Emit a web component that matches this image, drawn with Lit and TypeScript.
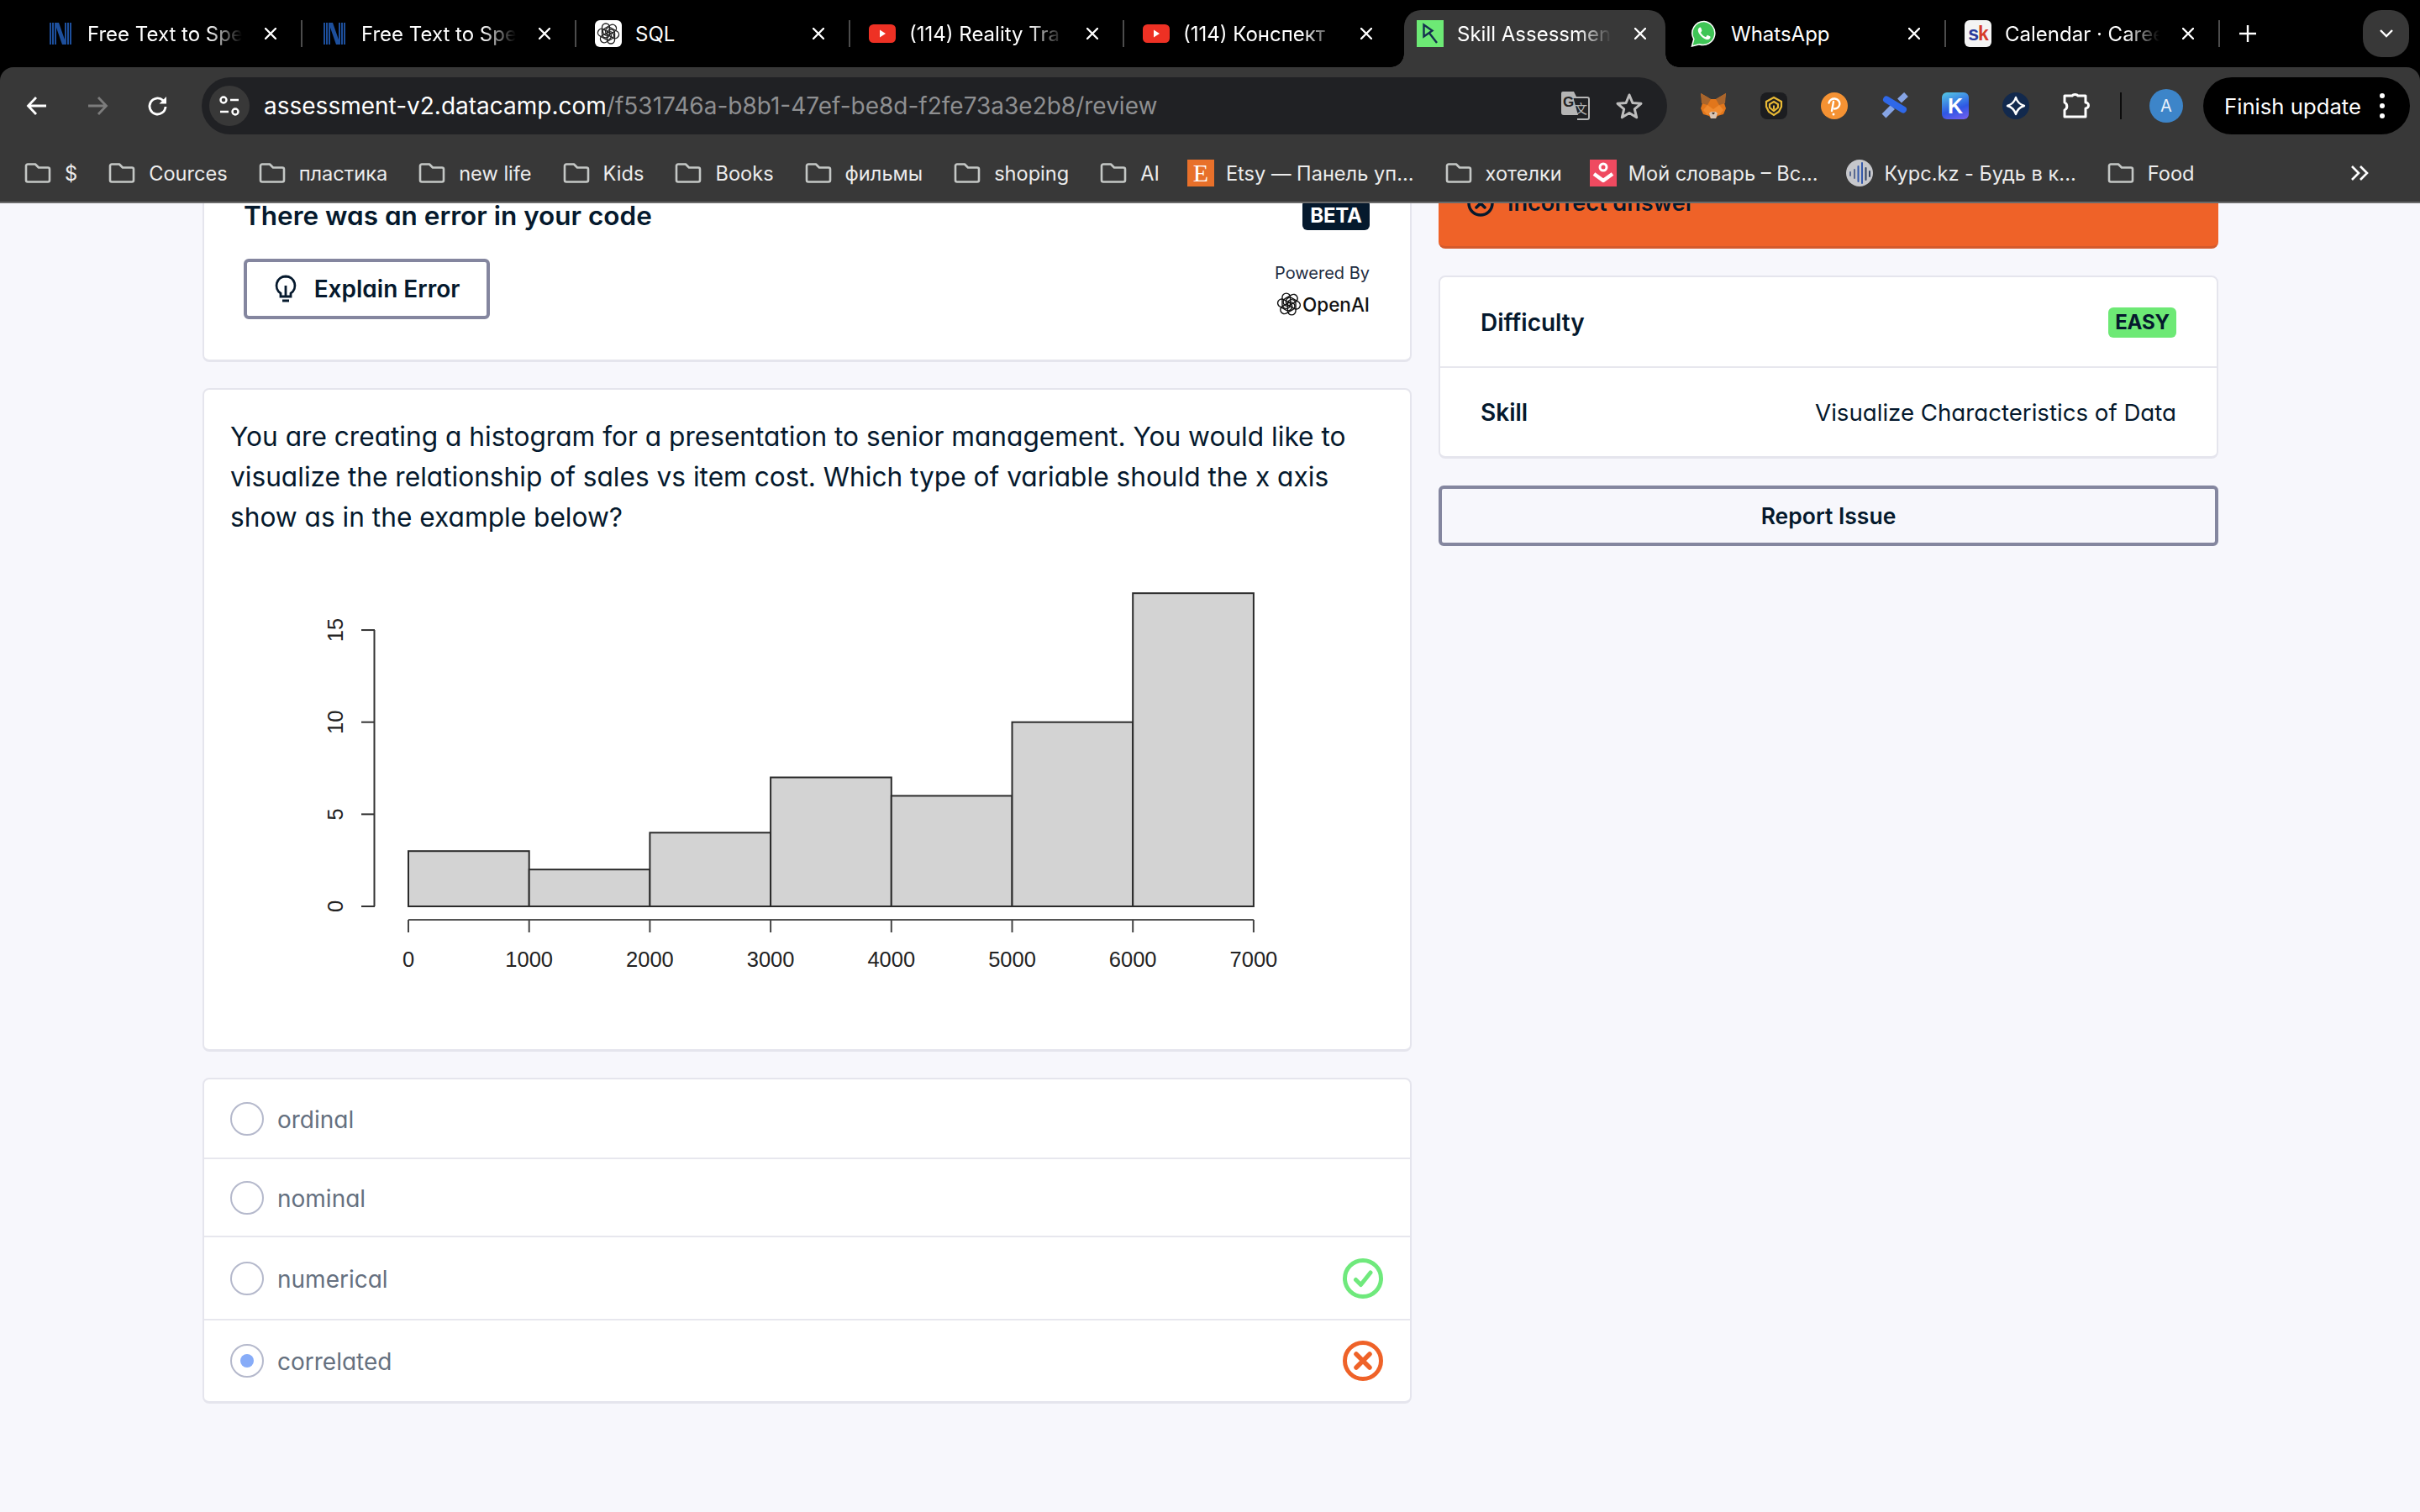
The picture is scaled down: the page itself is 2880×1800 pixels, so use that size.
import { LitElement, html, svg, css } from "lit";
import { customElement } from "lit/decorators.js";

const closeIcon = html`<svg class="close" viewBox="0 0 14 14"><path d="M1 1l12 12M13 1L1 13" stroke="#fff" stroke-width="2.4" stroke-linecap="round" fill="none"/></svg>`;

const knot = (c: string, w = 1.6) => svg`<g fill="none" stroke="${c}" stroke-width="${w}">
  ${[0, 60, 120, 180, 240, 300].map((a) => svg`<rect x="6.5" y="2" width="9" height="17" rx="4.5" transform="rotate(${a} 14 14)"/>`)}
</g>`;

const nIcon = html`<svg class="fav" viewBox="0 0 32 32"><g fill="#1d4f9c">
  <rect x="3" y="3" width="2" height="26"/><rect x="6" y="3" width="2" height="26"/><rect x="9" y="3" width="2" height="26"/>
  <rect x="21" y="3" width="2" height="26"/><rect x="24" y="3" width="2" height="26"/><rect x="27" y="3" width="2" height="26"/>
  <path d="M9 3h5l9 26h-5z"/></g></svg>`;
const sqlIcon = html`<svg class="fav" viewBox="0 0 32 32"><rect width="32" height="32" rx="6" fill="#fff"/><g transform="translate(2 2)">${knot("#222", 1.4)}</g></svg>`;
const ytIcon = html`<svg class="fav" viewBox="0 0 32 32"><rect y="5" width="32" height="22" rx="5.5" fill="#ee3124"/><path d="M13 11.5l7 4.5-7 4.5z" fill="#fff"/></svg>`;
const dcIcon = html`<svg class="fav" viewBox="0 0 32 32"><rect width="32" height="32" fill="#6de975"/><path d="M8.5 5.5V19.5L18.5 12.5ZM15.5 16L24 27" fill="none" stroke="#14304f" stroke-width="2.4"/></svg>`;
const waIcon = html`<svg class="fav" viewBox="0 0 32 32"><path d="M16 1.5A14 14 0 0 0 3.8 22.5L1.5 31l8.800-2.300A14 14 0 1 0 16 1.500z" fill="#3fc556" stroke="#fff" stroke-width="1.5"/><path d="M11 8.500c-1 .3-2.500 2-2.200 4.300.4 3 5 8.800 9.800 10.300 2.400.7 4.800-1 5-2.800.1-.8-.2-1-3.200-2.400-.8-.3-1.200 1.500-2.200 2-1 .4-5-2.500-6-5-.3-.9 1.400-1.600 1.200-2.600-.8-3-1.200-4.200-2.400-3.800z" fill="#fff"/></svg>`;
const skIcon = html`<span class="sk"><b>s</b><i>k</i></span>`;

const tabs = [
  { t: "Free Text to Spe", i: nIcon, fade: true },
  { t: "Free Text to Spe", i: nIcon, fade: true },
  { t: "SQL", i: sqlIcon },
  { t: "(114) Reality Tra", i: ytIcon, fade: true },
  { t: "(114) Конспект", i: ytIcon, fade: true },
  { t: "Skill Assessmen", i: dcIcon, fade: true, active: true },
  { t: "WhatsApp", i: waIcon },
  { t: "Calendar · Caree", i: skIcon, fade: true },
];

const folder = html`<svg class="folder" viewBox="0 0 32 24"><path d="M2 3.500A2 2 0 0 1 4 1.500h9l4 4h11a2 2 0 0 1 2 2v13a2 2 0 0 1-2 2H4a2 2 0 0 1-2-2z" fill="none" stroke="#c4c7c5" stroke-width="2.6" stroke-linejoin="round"/></svg>`;
const etsy = html`<span class="etsy">E</span>`;
const slovar = html`<svg class="fav" viewBox="0 0 32 32"><rect width="32" height="32" fill="#ef4a60"/><circle cx="16" cy="9" r="4" fill="none" stroke="#fff" stroke-width="3"/><path d="M5 17l11 8 11-8" fill="none" stroke="#fff" stroke-width="4.5" stroke-linejoin="round"/></svg>`;
const kurs = html`<svg class="fav" viewBox="0 0 32 32"><circle cx="16" cy="16" r="16" fill="#c6c7cb"/><g stroke-width="2" stroke-linecap="round"><path d="M5 15v4" stroke="#5a6a90"/><path d="M10 12v10" stroke="#5a6a90"/><path d="M14.500 8v18" stroke="#3559ab"/><path d="M19 4v24" stroke="#3559ab"/><path d="M23.500 10v14" stroke="#33425f"/><path d="M28 14v6" stroke="#33425f"/></g></svg>`;

const bookmarks = [
  { t: "$", i: folder },
  { t: "Cources", i: folder },
  { t: "пластика", i: folder },
  { t: "new life", i: folder },
  { t: "Kids", i: folder },
  { t: "Books", i: folder },
  { t: "фильмы", i: folder },
  { t: "shoping", i: folder },
  { t: "AI", i: folder },
  { t: "Etsy — Панель уп...", i: etsy, fi: true },
  { t: "хотелки", i: folder },
  { t: "Мой словарь – Вс...", i: slovar, fi: true },
  { t: "Курс.kz - Будь в к...", i: kurs, fi: true },
  { t: "Food", i: folder },
];

const ext = [
  html`<svg class="fav" viewBox="0 0 32 32"><path d="M1 1l12 7h6l12-7-2 12 2 6-3 7-7 2-2 3h-6l-2-3-7-2-3-7 2-6z" fill="#e2761b"/><path d="M1 1l12 7-4 7-7-2zM31 1L19 8l4 7 7-2z" fill="#a9652c"/><path d="M9 15l7 5 7-5 5 6-5 6-4-3h-6l-4 3-5-6z" fill="#f08a2e"/><path d="M11 25l2-2h6l2 2-2 6h-6z" fill="#d9c4b3"/><path d="M14 24h4l-2 2.500z" fill="#33251b"/></svg>`,
  html`<svg class="fav" viewBox="0 0 32 32"><rect width="32" height="32" rx="8" fill="#1c1d20"/><path d="M16 6l9 5v6l-3 6-6 4-6-4-3-6v-6z" fill="none" stroke="#e8b935" stroke-width="2.2"/><path d="M16 11l5 3v4l-5 4-5-4v-4z" fill="none" stroke="#e8b935" stroke-width="2.2"/><path d="M16 15.500v5" stroke="#e8b935" stroke-width="2"/></svg>`,
  html`<svg class="fav" viewBox="0 0 32 32"><circle cx="16" cy="16" r="16" fill="#f59233"/><path d="M13 22l2-11" stroke="#fff" stroke-width="2.4" stroke-linecap="round" fill="none"/><path d="M9.500 12.500a6.500 6 0 1 1 6.500 7" stroke="#fff" stroke-width="2.4" stroke-linecap="round" fill="none"/><circle cx="15" cy="26" r="1.500" fill="#fff"/></svg>`,
  html`<svg class="fav" viewBox="0 0 32 32"><path d="M21.500 10l8-7.500M3 28l10.500-10.500" stroke="#86a4e4" stroke-width="7"/><path d="M6 8.500l20 12" stroke="#2f68e8" stroke-width="8" stroke-linecap="round"/></svg>`,
  html`<span class="kext">K</span>`,
  html`<svg class="fav" viewBox="0 0 32 32"><circle cx="16" cy="16" r="16" fill="#12294d"/><path d="M16 6c1.500 5 5 8.500 10 10-5 1.500-8.500 5-10 10-1.500-5-5-8.500-10-10 5-1.500 8.500-5 10-10z" fill="none" stroke="#fff" stroke-width="2.4" stroke-linejoin="round"/></svg>`,
  html`<svg class="fav" viewBox="0 0 32 32"><path d="M2 4h9a4 3 0 0 1 7 0h9v8a3.500 3.500 0 0 1 0 7v10H2v-8a5 5 0 0 0 0-9z" fill="none" stroke="#fff" stroke-width="3" stroke-linejoin="round"/></svg>`,
];

const xs = [0, 1, 2, 3, 4, 5, 6, 7];
const bars = [3, 2, 4, 7, 6, 10, 17];
const X0 = 146, XS = 143.7, Y0 = 418, YS = 21.93;

const chart = html`<svg class="chart" viewBox="0 0 1220 500">
  ${bars.map((v, i) => svg`<rect x="${X0 + i * XS}" y="${Y0 - v * YS}" width="${XS}" height="${v * YS}" fill="#d3d3d3" stroke="#2b2b2b" stroke-width="2"/>`)}
  <path d="M105.5 ${Y0}V${Y0 - 15 * YS}" stroke="#333" stroke-width="2" fill="none"/>
  ${[0, 5, 10, 15].map((v) => svg`
    <path d="M90 ${Y0 - v * YS}h16" stroke="#333" stroke-width="2"/>
    <text class="tick" transform="translate(68 ${Y0 - v * YS}) rotate(-90)" text-anchor="middle">${v}</text>`)}
  <path d="M${X0} 434H${X0 + 7 * XS}" stroke="#555" stroke-width="2"/>
  ${xs.map((v) => svg`
    <path d="M${X0 + v * XS} 434v15" stroke="#444" stroke-width="2"/>
    <text class="tick" x="${X0 + v * XS}" y="490" text-anchor="middle">${v * 1000}</text>`)}
</svg>`;

const options = [
  { t: "ordinal", c: "first" },
  { t: "nominal", c: "" },
  { t: "numerical", s: "ok", c: "tall" },
  { t: "correlated", s: "bad", sel: true, c: "" },
];
const okIcon = html`<svg class="status" viewBox="0 0 48 48"><circle cx="24" cy="24" r="21.5" fill="none" stroke="#6fe97c" stroke-width="5"/><path d="M15.500 25.500l6 6L33 17" fill="none" stroke="#6fe97c" stroke-width="5" stroke-linecap="round" stroke-linejoin="round"/></svg>`;
const badIcon = html`<svg class="status" viewBox="0 0 48 48"><circle cx="24" cy="24" r="21.5" fill="none" stroke="#ef6228" stroke-width="5"/><path d="M16 16l16 16M32 16L16 32" fill="none" stroke="#ef6228" stroke-width="5.5" stroke-linecap="round"/></svg>`;

@customElement("app-root")
export class AppRoot extends LitElement {
  static styles = css`
    :host { display: block; width: 2880px; height: 1800px; overflow: hidden; background: #f7f7fc; font-family: Inter, "Noto Sans CJK SC", sans-serif; }
    .chrome { background: #000; color: #fff; font-size: 24px; }
    .tabstrip { display: flex; align-items: center; height: 80px; padding-left: 34px; box-sizing: border-box; }
    .tab { position: relative; width: 324px; height: 80px; display: flex; align-items: center; padding-left: 22px; box-sizing: border-box; flex: none; }
    .tab.active { width: 311px; margin: 0 6px 0 7px; padding: 0 0 12px 15px; background: #383838; border-radius: 20px 20px 0 0; height: 68px; align-self: flex-end; }
    .tab.active::before, .tab.active::after { content: ""; position: absolute; bottom: 0; width: 16px; height: 16px; }
    .tab.active::before { left: -16px; background: radial-gradient(circle at 0 0, transparent 15.5px, #383838 16px); }
    .tab.active::after { right: -16px; background: radial-gradient(circle at 100% 0, transparent 15.5px, #383838 16px); }
    .fav { width: 32px; height: 32px; flex: none; display: block; }
    .sk { width: 32px; height: 32px; flex: none; background: #f4f4f4; border-radius: 6px; display: flex; align-items: center; justify-content: center; font: 700 23px/32px "Liberation Sans", sans-serif; letter-spacing: -1px; }
    .sk b { color: #2a3a9c; } .sk i { color: #d63c2a; font-style: normal; }
    .title { width: 184px; margin-left: 16px; white-space: nowrap; overflow: hidden; flex: none; }
    .title.fade { -webkit-mask-image: linear-gradient(90deg, #000 78%, transparent 100%); mask-image: linear-gradient(90deg, #000 78%, transparent 100%); }
    .close { width: 14px; height: 14px; margin-left: 27px; flex: none; }
    .sep { width: 2px; height: 32px; background: #4c4c4c; flex: none; }
    .sep.hide { background: transparent; }
    .plus { width: 22px; height: 22px; margin-left: 22px; flex: none; }
    .tabmenu { width: 55px; height: 56px; margin: 0 13px 0 auto; background: #383838; border-radius: 22px; display: flex; align-items: center; justify-content: center; }
    .tabmenu svg { width: 18px; height: 12px; }

    .bar { background: #383838; border-radius: 16px 16px 0 0; height: 160px; padding-top: 12px; box-sizing: border-box; }
    .toolbar { display: flex; align-items: center; height: 68px; padding-left: 8px; }
    .nav { width: 72px; height: 40px; display: flex; align-items: center; justify-content: center; flex: none; }
    .nav svg { width: 28px; height: 28px; }
    .omni { width: 1744px; height: 68px; margin-left: 16px; background: #202124; border-radius: 34px; display: flex; align-items: center; padding: 0 28px 0 9px; box-sizing: border-box; flex: none; font-size: 28px; }
    .chip { width: 48px; height: 48px; border-radius: 50%; background: #383838; display: flex; align-items: center; justify-content: center; flex: none; margin-right: 17px; }
    .chip svg { width: 26px; height: 26px; }
    .url { white-space: nowrap; color: #8e8f91; flex: 1; }
    .url b { font-weight: 400; color: #fff; }
    .omni-ic { width: 34px; height: 34px; flex: none; margin-left: 30px; display: block; }
    .exts { display: flex; align-items: center; gap: 40px; margin-left: 39px; flex: none; }
    .kext { width: 32px; height: 32px; border-radius: 6px; background: linear-gradient(160deg, #55cbe6 0%, #2e57e4 60%, #7a5ff0 100%); color: #fff; font: 700 25px/32px "Liberation Sans", sans-serif; text-align: center; display: block; }
    .vsep { width: 2px; height: 32px; background: #0c0c0c; margin: 0 33px 0 36px; flex: none; }
    .avatar { width: 40px; height: 40px; border-radius: 50%; background: #3d85c9; color: #e8f0fa; font-size: 20px; line-height: 40px; text-align: center; flex: none; }
    .update { width: 246px; height: 68px; margin-left: 24px; background: #000; border-radius: 34px; display: flex; align-items: center; padding-left: 25px; box-sizing: border-box; flex: none; font-size: 25.7px; white-space: nowrap; }
    .update svg { width: 6px; height: 30px; margin-left: 22px; }

    .bookmarks { display: flex; align-items: center; gap: 37px; height: 48px; margin-top: 22px; padding-left: 29px; font-size: 23.6px; }
    .bm { display: flex; align-items: center; gap: 16px; white-space: nowrap; color: #ececec; flex: none; }
    .bm.fi { margin-left: -4px; gap: 14px; }
    .folder { width: 32px; height: 24px; display: block; flex: none; }
    .etsy { width: 32px; height: 32px; background: #e8702a; color: #fff; font: 400 30px/32px "Liberation Serif", serif; text-align: center; flex: none; display: block; }
    .more { margin-left: auto; margin-right: 60px; width: 24px; height: 22px; flex: none; }
    .edge { height: 2px; background: #6a6a6a; }

    .main { height: 1558px; overflow: hidden; display: grid; grid-template-columns: 1439px 928px; column-gap: 32px; padding-left: 241px; color: #05192d; box-sizing: border-box; font-size: 28px; font-feature-settings: "cv11" 1; }
    .col { display: flex; flex-direction: column; min-width: 0; }
    .col.left { margin-top: -40px; gap: 31px; }
    .col.right { margin-top: -40px; gap: 32px; }
    .card { background: #fff; border: 2px solid #e5e5ed; border-bottom-width: 3px; border-radius: 8px; box-sizing: border-box; }
    .err { padding: 34px 48px 48px 47px; }
    .err-head { display: flex; justify-content: space-between; align-items: center; height: 36px; font-size: 31.5px; font-weight: 600; }
    .badge { width: 80px; height: 36px; border-radius: 6px; font-size: 24px; font-weight: 700; display: flex; align-items: center; justify-content: center; letter-spacing: -.2px; }
    .badge.dark { background: #05192d; color: #fff; }
    .badge.green { background: #6de975; color: #05192d; width: 81px; }
    .err-body { display: flex; justify-content: space-between; align-items: center; margin-top: 34px; }
    .btn { background: transparent; border: 4px solid #84869f; border-radius: 6px; box-sizing: border-box; display: flex; align-items: center; justify-content: center; font-weight: 600; color: #05192d; }
    .btn.explain { width: 293px; height: 72px; gap: 20px; background: #fff; }
    .btn.explain svg { width: 28px; height: 34px; }
    .powered { display: flex; flex-direction: column; align-items: flex-end; gap: 10px; font-size: 20px; color: #1f2d42; padding-top: 2px; }
    .openai { display: flex; align-items: center; gap: 1px; font-weight: 500; font-size: 22.5px; color: #111; }
    .openai svg { width: 30px; height: 30px; }
    .question { padding: 32px 32px 0 31px; font-size: 31.65px; line-height: 48px; height: 790px; }
    .chart { display: block; width: 1220px; height: 500px; margin: 21px 0 0 66px; }
    .tick { font: 400 25.5px "Liberation Sans", sans-serif; fill: #222; }
    .options .row { display: flex; align-items: center; height: 93px; padding: 0 32px 0 31px; border-bottom: 2px solid #e7e7ee; color: #65707f; box-sizing: border-box; }
    .options .row.first { height: 95px; }
    .options .row.tall { height: 99px; }
    .options .row:last-child { border-bottom: 0; height: 96px; }
    .otext { padding-top: 2px; }
    .radio { width: 40px; height: 40px; border: 2px solid #b5b9cc; border-radius: 50%; box-sizing: border-box; display: flex; align-items: center; justify-content: center; margin-right: 16px; flex: none; }
    .radio i { width: 16px; height: 16px; border-radius: 50%; background: #87acf8; display: block; }
    .status { width: 48px; height: 48px; margin-left: auto; flex: none; display: block; }

    .wrong { height: 94px; background: #ef6228; border-bottom: 3px solid #d45a2c; border-radius: 0 0 8px 8px; box-sizing: border-box; display: flex; align-items: flex-start; padding: 23px 0 0 34px; gap: 16px; font-weight: 600; font-size: 27px; line-height: 34px; overflow: hidden; }
    .wrong svg { width: 32px; height: 32px; flex: none; margin-top: 1px; }
    .info .irow { display: flex; justify-content: space-between; align-items: center; height: 106px; padding: 1px 48px 0 48px; box-sizing: border-box; }
    .info .irow + .irow { border-top: 2px solid #e7e7ee; height: 107px; }
    .info .lbl { font-weight: 600; }
    .info .val { font-size: 27.65px; }
    .report { width: 928px; height: 72px; font-size: 26.5px; }
  `;

  render() {
    return html`
      <div class="chrome">
        <div class="tabstrip">
          ${tabs.map((t, i) => html`
            <div class="tab ${t.active ? "active" : ""}">
              ${t.i}
              <span class="title ${t.fade ? "fade" : ""}">${t.t}</span>
              ${closeIcon}
            </div>
            <div class="sep ${t.active || tabs[i + 1]?.active ? "hide" : ""}"></div>`)}
          <svg class="plus" viewBox="0 0 22 22"><path d="M11 1v20M1 11h20" stroke="#fff" stroke-width="2.4"/></svg>
          <div class="tabmenu"><svg viewBox="0 0 18 12"><path d="M2 2l7 7 7-7" fill="none" stroke="#fff" stroke-width="2.4"/></svg></div>
        </div>
        <div class="bar">
          <div class="toolbar">
            <div class="nav"><svg viewBox="0 0 28 28"><path d="M25 14H4M13 4L3.500 14 13 24" fill="none" stroke="#fff" stroke-width="2.8"/></svg></div>
            <div class="nav"><svg viewBox="0 0 28 28"><path d="M3 14h21M15 4l9.500 10L15 24" fill="none" stroke="#7c7c7c" stroke-width="2.8"/></svg></div>
            <div class="nav"><svg viewBox="0 0 28 28"><path d="M23 15a9.500 9.500 0 1 1-3-7.500L23 10" fill="none" stroke="#fff" stroke-width="2.8"/><path d="M24 3v8.500h-8.500z" fill="#fff"/></svg></div>
            <div class="omni">
              <div class="chip"><svg viewBox="0 0 26 26"><g fill="none" stroke="#fff" stroke-width="2.4"><circle cx="6" cy="6" r="3.500"/><path d="M14 6h10M2 20h10"/><circle cx="20" cy="20" r="3.500"/></g></svg></div>
              <span class="url"><b>assessment-v2.datacamp.com</b>/f531746a-b8b1-47ef-be8d-f2fe73a3e2b8/review</span>
              <svg class="omni-ic" viewBox="0 0 34 34"><path d="M2 0h13l3 6h-4l6 22H3a3 3 0 0 1-3-3V2a2 2 0 0 1 2-2z" fill="#b5b5b5"/><path d="M13 7h18a2 2 0 0 1 2 2v22a2 2 0 0 1-2 2H19" fill="none" stroke="#b5b5b5" stroke-width="2"/><text x="2" y="18" font-size="17" font-weight="700" font-family="Liberation Sans" fill="#222">G</text><text x="16" y="26" font-size="15" fill="#b5b5b5" font-family="Noto Sans CJK SC">文</text></svg>
              <svg class="omni-ic" viewBox="0 0 34 34"><path d="M17 4l3.900 9.500 10.100.8-7.700 6.600 2.400 9.900-8.700-5.300-8.700 5.300 2.400-9.900L3 14.300l10.100-.8z" fill="none" stroke="#bdbdbd" stroke-width="3" stroke-linejoin="round"/></svg>
            </div>
            <div class="exts">${ext}</div>
            <div class="vsep"></div>
            <div class="avatar">A</div>
            <div class="update">Finish update
              <svg viewBox="0 0 6 30"><circle cx="3" cy="3" r="3" fill="#fff"/><circle cx="3" cy="15" r="3" fill="#fff"/><circle cx="3" cy="27" r="3" fill="#fff"/></svg>
            </div>
          </div>
          <div class="bookmarks">
            ${bookmarks.map((b) => html`<div class="bm ${b.fi ? "fi" : ""}">${b.i}<span>${b.t}</span></div>`)}
            <svg class="more" viewBox="0 0 24 22"><path d="M3 3l8 8-8 8M13 3l8 8-8 8" fill="none" stroke="#fff" stroke-width="2.6"/></svg>
          </div>
        </div>
        <div class="edge"></div>
      </div>
      <div class="main">
        <div class="col left">
          <div class="card err">
            <div class="err-head"><span>There was an error in your code</span><span class="badge dark">BETA</span></div>
            <div class="err-body">
              <div class="btn explain">
                <svg viewBox="0 0 28 34"><path d="M14 2a11 11 0 0 0-6 20.200V26h12v-3.800A11 11 0 0 0 14 2z" fill="none" stroke="#05192d" stroke-width="2.8"/><path d="M14 13v12M10 31h8" stroke="#05192d" stroke-width="2.8" fill="none"/></svg>
                <span>Explain Error</span>
              </div>
              <div class="powered"><span>Powered By</span><span class="openai"><svg viewBox="0 0 28 28">${knot("#111", 1.3)}</svg>OpenAI</span></div>
            </div>
          </div>
          <div class="card question">
            You are creating a histogram for a presentation to senior management. You would like to<br>visualize the relationship of sales vs item cost. Which type of variable should the x axis<br>show as in the example below?
            ${chart}
          </div>
          <div class="card options">
            ${options.map((o) => html`
              <div class="row ${o.c}">
                <span class="radio">${o.sel ? html`<i></i>` : ""}</span>
                <span class="otext">${o.t}</span>
                ${o.s === "ok" ? okIcon : o.s === "bad" ? badIcon : ""}
              </div>`)}
          </div>
        </div>
        <div class="col right">
          <div class="wrong">
            <svg viewBox="0 0 32 32"><circle cx="16" cy="16" r="14" fill="none" stroke="#05192d" stroke-width="3.5"/><path d="M11 11l10 10M21 11L11 21" stroke="#05192d" stroke-width="3.5" stroke-linecap="round"/></svg>
            <span>Incorrect answer</span>
          </div>
          <div class="card info">
            <div class="irow"><span class="lbl">Difficulty</span><span class="badge green">EASY</span></div>
            <div class="irow"><span class="lbl">Skill</span><span class="val">Visualize Characteristics of Data</span></div>
          </div>
          <div class="btn report">Report Issue</div>
        </div>
      </div>
    `;
  }
}
